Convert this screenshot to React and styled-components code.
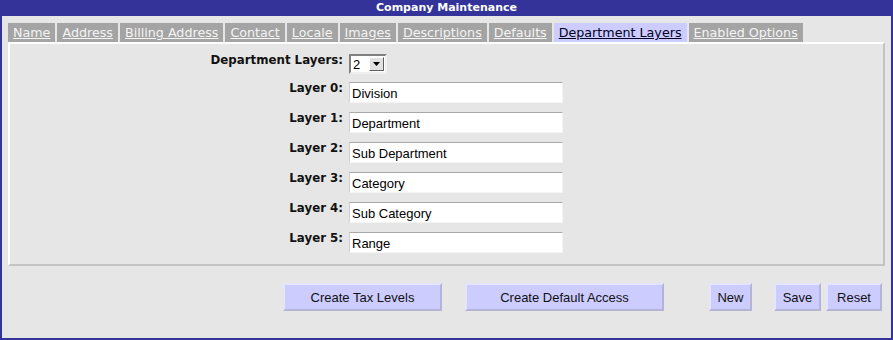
import styled, { createGlobalStyle } from "styled-components";

const GlobalStyle = createGlobalStyle`
  html, body {
    margin: 0;
    padding: 0;
    background: #ffffff;
  }
`;

const Window = styled.div`
  width: 893px;
  height: 340px;
  box-sizing: border-box;
  border: 2px solid #333399;
  border-top: none;
  background: #e6e6e6;
  display: flex;
  flex-direction: column;
  font-family: "DejaVu Sans", Verdana, sans-serif;
`;

const TitleBar = styled.div`
  height: 16px;
  margin: 0 -2px;
  background: #333399;
  color: #ffffff;
  font-size: 11px;
  font-weight: bold;
  line-height: 16px;
  text-align: center;
`;

const Body = styled.div`
  padding: 7px 6px 0;
  display: flex;
  flex-direction: column;
`;

const TabRow = styled.div`
  display: flex;
  gap: 2px;
  height: 19px;
`;

const Tab = styled.a`
  display: block;
  padding: 0 5px;
  font-size: 12.7px;
  line-height: 20px;
  background: ${(p) => (p.$active ? "#ccccff" : "#a4a4a4")};
  color: ${(p) => (p.$active ? "#000022" : "#f4f4f4")};
  text-decoration: underline;
  cursor: pointer;
`;

const Panel = styled.div`
  border: 2px solid;
  border-color: #ffffff #c4c4c4 #c4c4c4 #ffffff;
  padding: 10px 0 11px;
`;

const FormGrid = styled.div`
  display: grid;
  grid-template-columns: 333px auto;
  column-gap: 6px;
  row-gap: 9px;
`;

const Label = styled.label`
  text-align: right;
  font-size: 11.8px;
  font-weight: bold;
  line-height: 14px;
  color: #111111;
  margin-top: -1px;
`;

const TextInput = styled.input`
  width: 214px;
  height: 21px;
  box-sizing: border-box;
  border: 1px solid;
  border-color: #a8a8a8 #f4f4f4 #f4f4f4 #d0d0d0;
  background: #ffffff;
  padding: 2px 2px 0;
  font-family: "Liberation Sans", Arial, sans-serif;
  font-size: 13px;
  color: #000000;
  outline: none;
`;

const SelectBox = styled.div`
  width: 38px;
  height: 20px;
  box-sizing: border-box;
  border: 2px solid;
  border-color: #808080 #f0f0f0 #f0f0f0 #808080;
  background: #ffffff;
  display: flex;
  align-items: center;
  justify-content: space-between;
  padding: 0 1px 0 2px;
  margin-bottom: -1px;
  font-family: "Liberation Sans", Arial, sans-serif;
  font-size: 13px;
`;

const ArrowButton = styled.span`
  width: 15px;
  height: 14px;
  box-sizing: border-box;
  border: 1px solid;
  border-color: #ffffff #606060 #606060 #ffffff;
  background: #e2e2e2;
  display: flex;
  align-items: center;
  justify-content: center;
`;

const ButtonRow = styled.div`
  display: flex;
  justify-content: flex-end;
  padding: 17px 3px 0 0;
`;

const Button = styled.button`
  width: ${(p) => p.$width}px;
  height: 28px;
  margin-left: ${(p) => p.$space}px;
  box-sizing: border-box;
  border: 2px solid;
  border-color: #e4e4ff #b4b4d4 #b4b4d4 #e4e4ff;
  background: #ccccff;
  font-family: "Liberation Sans", Arial, sans-serif;
  font-size: 13px;
  color: #111111;
  padding: 0;
  cursor: pointer;
`;

const tabs = [
  "Name",
  "Address",
  "Billing Address",
  "Contact",
  "Locale",
  "Images",
  "Descriptions",
  "Defaults",
  "Department Layers",
  "Enabled Options",
];

const layers = ["Division", "Department", "Sub Department", "Category", "Sub Category", "Range"];

const buttons = [
  { label: "Create Tax Levels", width: 159, space: 0 },
  { label: "Create Default Access", width: 199, space: 23 },
  { label: "New", width: 43, space: 45 },
  { label: "Save", width: 47, space: 22 },
  { label: "Reset", width: 56, space: 5 },
];

export default function App() {
  return (
    <>
      <GlobalStyle />
      <Window>
        <TitleBar>Company Maintenance</TitleBar>
        <Body>
          <TabRow>
            {tabs.map((t) => (
              <Tab key={t} $active={t === "Department Layers"}>
                {t}
              </Tab>
            ))}
          </TabRow>
          <Panel>
            <FormGrid>
              <Label>Department Layers:</Label>
              <SelectBox>
                2
                <ArrowButton>
                  <svg width="7" height="4" viewBox="0 0 7 4">
                    <path d="M0 0h7L3.5 4z" fill="#000" />
                  </svg>
                </ArrowButton>
              </SelectBox>
              {layers.map((v, i) => (
                <>
                  <Label key={"l" + i}>Layer {i}:</Label>
                  <TextInput key={"i" + i} defaultValue={v} />
                </>
              ))}
            </FormGrid>
          </Panel>
          <ButtonRow>
            {buttons.map((b) => (
              <Button key={b.label} $width={b.width} $space={b.space}>
                {b.label}
              </Button>
            ))}
          </ButtonRow>
        </Body>
      </Window>
    </>
  );
}
